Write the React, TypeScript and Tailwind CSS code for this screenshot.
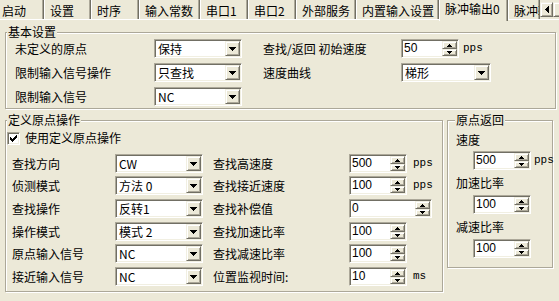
import React from "react";

// classic 3D frames
const sunken =
  "border border-t-[#ACA899] border-l-[#ACA899] border-r-white border-b-white shadow-[inset_1px_1px_0_#716F64,inset_-1px_-1px_0_#F1EFE2]";
const raised =
  "border border-t-[#F1EFE2] border-l-[#F1EFE2] border-r-[#716F64] border-b-[#716F64] shadow-[inset_1px_1px_0_#FFFFFF,inset_-1px_-1px_0_#ACA899]";
const etched = "border border-[#ACA899] shadow-[inset_1px_1px_0_#FFFFFF,1px_1px_0_#FFFFFF]";

const DownArrow = () => (
  <svg width="7" height="4" shapeRendering="crispEdges">
    <rect x="0" y="0" width="7" height="1" />
    <rect x="1" y="1" width="5" height="1" />
    <rect x="2" y="2" width="3" height="1" />
    <rect x="3" y="3" width="1" height="1" />
  </svg>
);

const SmallUp = () => (
  <svg width="5" height="3" shapeRendering="crispEdges">
    <rect x="2" y="0" width="1" height="1" />
    <rect x="1" y="1" width="3" height="1" />
    <rect x="0" y="2" width="5" height="1" />
  </svg>
);

const SmallDown = () => (
  <svg width="5" height="3" shapeRendering="crispEdges">
    <rect x="0" y="0" width="5" height="1" />
    <rect x="1" y="1" width="3" height="1" />
    <rect x="2" y="2" width="1" height="1" />
  </svg>
);

const LeftArrow = () => (
  <svg width="4" height="7" shapeRendering="crispEdges">
    <rect x="3" y="0" width="1" height="7" />
    <rect x="2" y="1" width="1" height="5" />
    <rect x="1" y="2" width="1" height="3" />
    <rect x="0" y="3" width="1" height="1" />
  </svg>
);

const Combo = ({ value, className }: { value: string; className: string }) => (
  <div className={`flex h-[19px] shrink-0 bg-white p-[1px] ${sunken} ${className}`}>
    <div className="flex-1 pl-[2px] leading-[15px] whitespace-nowrap overflow-hidden">{value}</div>
    <div className={`w-[15px] h-[15px] flex items-center justify-center bg-[#ECE9D8] ${raised}`}>
      <DownArrow />
    </div>
  </div>
);

const Spin = ({ value, className }: { value: string; className: string }) => (
  <div className={`flex h-[19px] shrink-0 bg-white p-[1px] ${sunken} ${className}`}>
    <div className="flex-1 pl-[1px] leading-[15px] text-[12px] [font-family:'Liberation_Sans',sans-serif]">{value}</div>
    <div className="flex flex-col w-[15px]">
      <div className={`h-[8px] flex items-center justify-center bg-[#ECE9D8] ${raised}`}>
        <SmallUp />
      </div>
      <div className={`h-[7px] flex items-center justify-center bg-[#ECE9D8] ${raised}`}>
        <SmallDown />
      </div>
    </div>
  </div>
);

const Unit = ({ children, className = "" }: { children: string; className?: string }) => (
  <span className={`text-[11px] leading-[19px] [font-family:'Liberation_Mono',monospace] ${className}`}>{children}</span>
);

const Group = ({ title, titleLeft, className, children }: { title: string; titleLeft: string; className: string; children: React.ReactNode }) => (
  <div className={`relative shrink-0 ${etched} ${className}`}>
    <span className={`absolute -top-[8px] ${titleLeft} px-[1px] bg-[#ECE9D8] leading-[14px] whitespace-nowrap`}>{title}</span>
    {children}
  </div>
);

const tabs = [
  { label: "启动", w: "w-[44px]", first: true },
  { label: "设置", w: "w-[47px]" },
  { label: "时序", w: "w-[48px]" },
  { label: "输入常数", w: "w-[61px]" },
  { label: "串口1", w: "w-[48px]" },
  { label: "串口2", w: "w-[48px]" },
  { label: "外部服务", w: "w-[60px]" },
  { label: "内置输入设置", w: "w-[83px]" },
  { label: "脉冲输出0", w: "w-[69px]", active: true },
  { label: "脉冲输出1", w: "w-[32px]" },
];

const originRows = [
  { label: "查找方向", combo: "CW", mid: "查找高速度", spin: "500", unit: "pps", mt: "mt-0" },
  { label: "侦测模式", combo: "方法 0", mid: "查找接近速度", spin: "100", unit: "pps", mt: "mt-[3px]" },
  { label: "查找操作", combo: "反转1", mid: "查找补偿值", spin: "0", wide: true, mt: "mt-[4px]" },
  { label: "操作模式", combo: "模式 2", mid: "查找加速比率", spin: "100", mt: "mt-[4px]" },
  { label: "原点输入信号", combo: "NC", mid: "查找减速比率", spin: "100", mt: "mt-[3px]" },
  { label: "接近输入信号", combo: "NC", mid: "位置监视时间:", spin: "10", unit: "ms", mt: "mt-[4px]" },
];

export default function App() {
  return (
    <div className="w-[559px] h-[301px] overflow-hidden bg-[#ECE9D8] text-black text-[12px] leading-[14px] [font-family:'Noto_Sans_CJK_SC','Liberation_Sans',sans-serif]">
      {/* tab strip */}
      <div className="flex h-[19px] items-start">
        {tabs.map((t) => (
          <div
            key={t.label}
            className={`${t.w} shrink-0 overflow-hidden whitespace-nowrap border-r border-r-[#716F64] shadow-[inset_-1px_0_0_#ACA899] ${
              t.first ? "pl-[2px]" : "border-l border-l-white pl-[5px]"
            } ${t.active ? "relative z-10 h-[21px] bg-[#ECE9D8] pt-[2px]" : "h-[19px] pt-[4px]"}`}
          >
            {t.label}
          </div>
        ))}
        <div className="flex shrink-0 mt-[2px] w-[19px] overflow-hidden">
          <div className={`w-[13px] h-[15px] shrink-0 flex items-center justify-center bg-[#ECE9D8] ${raised}`}>
            <LeftArrow />
          </div>
          <div className={`w-[13px] h-[15px] shrink-0 bg-[#ECE9D8] ${raised}`} />
        </div>
      </div>

      {/* tab page */}
      <div className="h-[282px] border-t border-t-white pl-[5px]">
        <Group title="基本设置" titleLeft="left-[1px]" className="mt-[12px] w-[551px] h-[77px]">
          <div className="flex pt-[6px] pl-[9px]">
            <div className="flex flex-col gap-[5px]">
              <div className="flex items-center h-[19px]">
                <span className="w-[139px]">未定义的原点</span>
                <Combo value="保持" className="w-[88px]" />
              </div>
              <div className="flex items-center h-[19px]">
                <span className="w-[139px]">限制输入信号操作</span>
                <Combo value="只查找" className="w-[88px]" />
              </div>
              <div className="flex items-center h-[19px]">
                <span className="w-[139px]">限制输入信号</span>
                <Combo value="NC" className="w-[88px]" />
              </div>
            </div>
            <div className="flex flex-col gap-[5px] ml-[21px]">
              <div className="flex items-center h-[19px]">
                <span className="w-[138px] whitespace-nowrap">查找/返回 初始速度</span>
                <Spin value="50" className="w-[58px]" />
                <Unit className="ml-[4px]">pps</Unit>
              </div>
              <div className="flex items-center h-[19px]">
                <span className="w-[138px]">速度曲线</span>
                <Combo value="梯形" className="w-[90px]" />
              </div>
            </div>
          </div>
        </Group>

        <div className="flex items-start mt-[11px]">
          <Group title="定义原点操作" titleLeft="left-[1px]" className="w-[438px] h-[172px]">
            <div className="flex items-center pt-[10px] pl-[1px]">
              <div className={`w-[13px] h-[13px] bg-white flex items-center justify-center ${sunken}`}>
                <svg width="7" height="7" shapeRendering="crispEdges">
                  <rect x="6" y="0" width="1" height="1" />
                  <rect x="5" y="1" width="2" height="1" />
                  <rect x="0" y="2" width="1" height="1" />
                  <rect x="4" y="2" width="3" height="1" />
                  <rect x="0" y="3" width="2" height="1" />
                  <rect x="3" y="3" width="3" height="1" />
                  <rect x="0" y="4" width="5" height="1" />
                  <rect x="1" y="5" width="3" height="1" />
                  <rect x="2" y="6" width="1" height="1" />
                </svg>
              </div>
              <span className="ml-[5px]">使用定义原点操作</span>
            </div>
            <div className="flex flex-col pl-[6px] mt-[9px]">
              {originRows.map((r) => (
                <div key={r.label} className={`flex items-center h-[19px] ${r.mt}`}>
                  <span className="w-[103px]">{r.label}</span>
                  <Combo value={r.combo} className="w-[88px]" />
                  <span className="w-[136px] ml-[10px] whitespace-nowrap">{r.mid}</span>
                  <Spin value={r.spin} className={r.wide ? "w-[83px]" : "w-[58px]"} />
                  {r.unit && <Unit className="ml-[6px]">{r.unit}</Unit>}
                </div>
              ))}
            </div>
          </Group>

          <Group title="原点返回" titleLeft="left-[7px]" className="ml-[4px] w-[106px] h-[148px]">
            <div className="flex flex-col pt-[12px] pl-[8px]">
              <span>速度</span>
              <div className="flex items-center mt-[4px] ml-[17px]">
                <Spin value="500" className="w-[58px]" />
                <Unit className="ml-[3px]">pps</Unit>
              </div>
              <span className="mt-[6px]">加速比率</span>
              <Spin value="100" className="w-[58px] mt-[5px] ml-[17px]" />
              <span className="mt-[6px]">减速比率</span>
              <Spin value="100" className="w-[58px] mt-[5px] ml-[17px]" />
            </div>
          </Group>
        </div>
      </div>
    </div>
  );
}
